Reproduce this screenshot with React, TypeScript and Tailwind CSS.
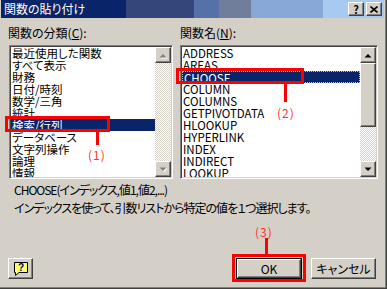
import React from "react";

const font = "font-['Noto_Sans_CJK_JP','Noto_Sans',sans-serif] [font-feature-settings:'palt']";
const raised =
  "border border-t-white border-l-white border-r-[#404040] border-b-[#404040] shadow-[inset_-1px_-1px_0_#808080] bg-[#d4d0c8]";
const sunken =
  "border border-t-[#808080] border-l-[#808080] border-r-white border-b-white shadow-[inset_1px_1px_0_#404040,inset_-1px_-1px_0_#d4d0c8] p-[1px] bg-white";
const track = "bg-[repeating-conic-gradient(#ffffff_0_25%,#d4d0c8_0_50%)] bg-[length:2px_2px]";

const categories = [
  "最近使用した関数",
  "すべて表示",
  "財務",
  "日付/時刻",
  "数学/三角",
  "統計",
  "検索/行列",
  "データベース",
  "文字列操作",
  "論理",
  "情報",
];

const functions = [
  "ADDRESS",
  "AREAS",
  "CHOOSE",
  "COLUMN",
  "COLUMNS",
  "GETPIVOTDATA",
  "HLOOKUP",
  "HYPERLINK",
  "INDEX",
  "INDIRECT",
  "LOOKUP",
];

function Arrow({ up, disabled }: { up?: boolean; disabled?: boolean }) {
  const d = up ? "M4 2 L7.5 5.5 L0.5 5.5 Z" : "M0.5 1.5 L7.5 1.5 L4 5 Z";
  return (
    <svg width="8" height="7" viewBox="0 0 8 7">
      {disabled && <path d={d} fill="#ffffff" transform="translate(1 1)" />}
      <path d={d} fill={disabled ? "#808080" : "#000000"} />
    </svg>
  );
}

function ScrollBar({ disabled, thumb }: { disabled?: boolean; thumb?: boolean }) {
  return (
    <div className="flex w-[16px] shrink-0 flex-col">
      <div className={`${raised} flex h-[16px] items-center justify-center`}>
        <Arrow up disabled={disabled} />
      </div>
      {thumb && <div className={`${raised} h-[64px]`} />}
      <div className={`flex-1 ${track}`} />
      <div className={`${raised} flex h-[16px] items-center justify-center`}>
        <Arrow disabled={disabled} />
      </div>
    </div>
  );
}

function ListBox({
  items,
  selected,
  focused,
  width,
  disabled,
  thumb,
}: {
  items: string[];
  selected: number;
  focused?: boolean;
  width: string;
  disabled?: boolean;
  thumb?: boolean;
}) {
  return (
    <div className={`${sunken} ${width} flex h-[134px]`}>
      <div className="flex-1 overflow-hidden">
        {items.map((item, i) => (
          <div
            key={item}
            className={`h-[12px] whitespace-nowrap pl-[1px] text-[11.5px] leading-[12px] ${
              i === selected ? "bg-[#0a246a] text-white" : "text-black"
            } ${i === selected && focused ? "border border-dotted border-[#c8c8c8] pl-0 leading-[10px]" : ""}`}
          >
            {item}
          </div>
        ))}
      </div>
      <ScrollBar disabled={disabled} thumb={thumb} />
    </div>
  );
}

export default function App() {
  return (
    <div
      className={`${font} relative flex h-[289px] w-[387px] flex-col overflow-hidden bg-[#d4d0c8] pb-[2px] pl-[1px] pr-[3px] shadow-[inset_-1px_-1px_0_#404040,inset_-2px_-2px_0_#808080]`}
    >
      {/* title bar */}
      <div className="flex h-[18px] shrink-0 items-center bg-[linear-gradient(to_right,#0a246a_0%,#0a246a_32.5%,#34467a_32.6%,#34467a_50.3%,#5670a8_50.4%,#5670a8_56.8%,#707e9c_56.9%,#707e9c_65.2%,#88a8d8_65.3%,#88a8d8_84%,#a6caf0_84.1%)] pl-[3px] pr-[2px]">
        <span className="text-[12px] leading-[12px] text-white">関数の貼り付け</span>
        <div className="ml-auto flex gap-[2px]">
          <div className={`${raised} flex h-[14px] w-[16px] items-center justify-center text-[11px] font-bold leading-none text-black`}>
            ?
          </div>
          <div className={`${raised} flex h-[14px] w-[16px] items-center justify-center`}>
            <svg width="8" height="7" viewBox="0 0 8 7">
              <path d="M0.5 0.5 L7.5 6.5 M7.5 0.5 L0.5 6.5" stroke="#000" strokeWidth="1.6" />
            </svg>
          </div>
        </div>
      </div>

      {/* client */}
      <div className="flex flex-1 flex-col pl-[7px] pt-[9px]">
        <div className="flex gap-[7px]">
          <div className="flex flex-col">
            <div className="h-[12px] text-[12px] leading-[12px] text-black">
              関数の分類(<span className="underline">C</span>):
            </div>
            <div className="ml-[1px] mt-[6px]">
              <ListBox items={categories} selected={6} width="w-[164px]" disabled />
            </div>
          </div>
          <div className="flex flex-col">
            <div className="h-[12px] text-[12px] leading-[12px] text-black">
              関数名(<span className="underline">N</span>):
            </div>
            <div className="mt-[6px]">
              <ListBox items={functions} selected={2} focused width="w-[198px]" thumb />
            </div>
          </div>
        </div>

        <div className="mt-[5px] pl-[6px] text-[12px] leading-[12px] tracking-[-1px] text-black">
          CHOOSE(インデックス,値1,値2,...)
        </div>
        <div className="mt-[6px] pl-[6px] text-[12px] leading-[12px] tracking-[-1px] text-black">
          インデックスを使って、引数リストから特定の値を１つ選択します。
        </div>

        <div className="mt-[44px] flex items-start pr-[8px]">
          <div className={`${raised} flex h-[21px] w-[25px] items-center justify-center`}>
            <svg width="18" height="16" viewBox="0 0 18 16">
              <path d="M2.5 1.5 H15.5 V11.5 H7 L3.5 14.5 V11.5 H2.5 Z" fill="#ffff66" stroke="#000" />
              <text x="9" y="10" textAnchor="middle" fontSize="10" fontWeight="bold" fill="#000080" fontFamily="Liberation Sans, sans-serif">
                ?
              </text>
            </svg>
          </div>
          <div className="ml-auto border border-black">
            <div className={`${raised} flex h-[19px] w-[64px] items-center justify-center text-[12px] leading-none text-black`}>
              OK
            </div>
          </div>
          <div className={`${raised} ml-[9px] flex h-[21px] w-[65px] items-center justify-center text-[12px] leading-none text-black`}>
            キャンセル
          </div>
        </div>
      </div>

      {/* red annotations */}
      <div className="absolute left-[5px] top-[116px] h-[16px] w-[105px] border-[3px] border-[#ff0000]" />
      <div className="absolute left-[96px] top-[132px] h-[13px] w-[3px] bg-[#ff0000]" />
      <div className="absolute left-[88px] top-[149px] text-[12px] leading-[12px] tracking-[1px] text-[#ff3030]">(1)</div>

      <div className="absolute left-[176px] top-[68px] h-[16px] w-[128px] border-[3px] border-[#ff0000]" />
      <div className="absolute left-[284px] top-[84px] h-[18px] w-[3px] bg-[#ff0000]" />
      <div className="absolute left-[277px] top-[107px] text-[12px] leading-[12px] tracking-[1px] text-[#ff3030]">(2)</div>

      <div className="absolute left-[255px] top-[226px] text-[12px] leading-[12px] tracking-[1px] text-[#ff3030]">(3)</div>
      <div className="absolute left-[265px] top-[238px] h-[16px] w-[3px] bg-[#ff0000]" />
      <div className="absolute left-[232px] top-[254px] h-[28px] w-[74px] border-[3px] border-[#ff0000]" />
    </div>
  );
}
